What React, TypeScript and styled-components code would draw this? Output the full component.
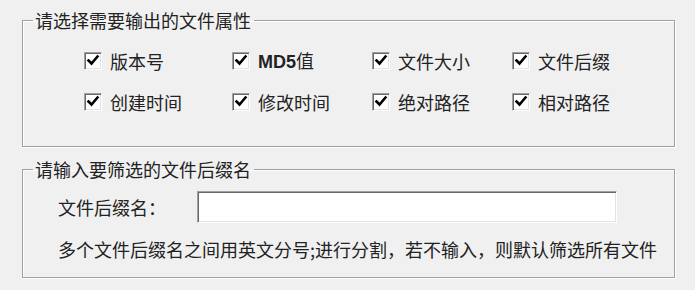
import { FC } from 'react'
import styled, { createGlobalStyle } from 'styled-components'

const GlobalStyle = createGlobalStyle`
  html, body {
    margin: 0;
    padding: 0;
    background: #f0f0f0;
  }
  body {
    font-family: 'Noto Sans CJK SC', 'Noto Sans', sans-serif;
    color: #222;
  }
`

const attributes = [
  ['版本号', 'MD5值', '文件大小', '文件后缀'],
  ['创建时间', '修改时间', '绝对路径', '相对路径']
].flat()

const CheckMark: FC = () => (
  <svg width="16" height="16" viewBox="0 0 16 16">
    <path d="M3.5 7.5 L6.5 10.5 L12.5 3.5" fill="none" stroke="#000" strokeWidth="2.6" strokeLinecap="square" />
  </svg>
)

const renderLabel = (label: string) => {
  if (label.startsWith('MD5')) {
    return (
      <>
        <Latin>MD5</Latin>
        {label.slice(3)}
      </>
    )
  }
  return label
}

const App: FC = () => {
  return (
    <>
      <GlobalStyle />
      <Page>
        <GroupBox>
          <Legend>请选择需要输出的文件属性</Legend>
          <GroupBody $padding="8px 0 24px 61px">
            <CheckGrid>
              {attributes.map((label) => (
                <CheckItem key={label}>
                  <CheckBox>
                    <CheckMark />
                  </CheckBox>
                  <CheckText>{renderLabel(label)}</CheckText>
                </CheckItem>
              ))}
            </CheckGrid>
          </GroupBody>
        </GroupBox>

        <GroupBox>
          <Legend>请输入要筛选的文件后缀名</Legend>
          <GroupBody $padding="10px 0 16px 35px">
            <InputRow>
              <FieldLabel>文件后缀名：</FieldLabel>
              <TextInput type="text" />
            </InputRow>
            <Hint>多个文件后缀名之间用英文分号;进行分割，若不输入，则默认筛选所有文件</Hint>
          </GroupBody>
        </GroupBox>
      </Page>
    </>
  )
}

const Page = styled.div`
  width: 695px;
  height: 290px;
  box-sizing: border-box;
  padding: 8px 20px 0 22px;
  display: flex;
  flex-direction: column;
  gap: 10px;
  font-size: 18px;
`

const GroupBox = styled.fieldset`
  margin: 0;
  min-width: 0;
  padding: 0;
  border: 1px solid #a0a0a0;
  box-shadow: 1px 1px 0 #fff, inset 1px 1px 0 #fff;
`

const Legend = styled.legend`
  margin-left: 10px;
  padding: 0 3px 0 2px;
  font-size: 18px;
  line-height: 24px;
  color: #222;
`

const GroupBody = styled.div<{ $padding: string }>`
  padding: ${(props) => props.$padding};
`

const CheckGrid = styled.div`
  display: grid;
  grid-template-columns: 148px 140px 140px 140px;
  grid-auto-rows: 41px;
`

const CheckItem = styled.label`
  display: flex;
  align-items: center;
  gap: 8px;
`

const sunken = `
  box-sizing: border-box;
  background: #fff;
  border-style: solid;
  border-width: 1px;
  border-color: #a0a0a0 #fff #fff #a0a0a0;
  box-shadow: inset 1px 1px 0 #696969, inset -1px -1px 0 #e3e3e3;
`

const CheckBox = styled.span`
  ${sunken}
  width: 18px;
  height: 18px;
  display: flex;
  align-items: center;
  justify-content: center;
  flex-shrink: 0;
`

const CheckText = styled.span`
  font-size: 18px;
  line-height: 24px;
  white-space: nowrap;
`

const Latin = styled.span`
  font-family: 'Liberation Sans', Arial, sans-serif;
  font-weight: bold;
  font-size: 18px;
`

const InputRow = styled.div`
  display: grid;
  grid-template-columns: 139px 420px;
  align-items: center;
`

const FieldLabel = styled.span`
  font-size: 18px;
  line-height: 24px;
`

const TextInput = styled.input`
  ${sunken}
  width: 420px;
  height: 32px;
  margin: 0;
  padding: 0 4px;
  outline: none;
  font: inherit;
`

const Hint = styled.div`
  margin-top: 14px;
  font-size: 18px;
  line-height: 24px;
  white-space: nowrap;
`

export default App
